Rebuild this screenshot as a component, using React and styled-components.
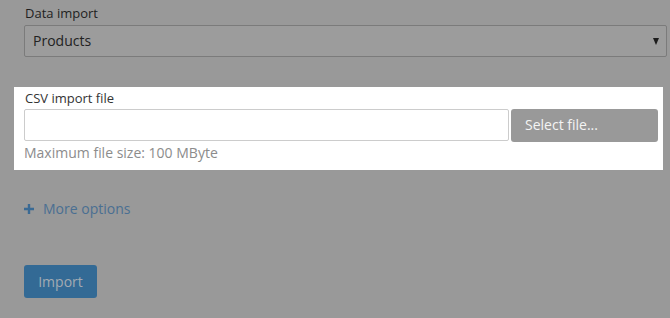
import React from "react";
import styled, { createGlobalStyle } from "styled-components";

const Global = createGlobalStyle`
  html, body { margin: 0; padding: 0; background: #999999; }
  body { font-family: "Open Sans", "Liberation Sans", sans-serif; }
  * { box-sizing: border-box; }
`;

const Page = styled.div`
  width: 670px;
  height: 318px;
  padding: 4px 3px 0 24px;
  display: flex;
  flex-direction: column;
`;

const Label = styled.label`
  display: block;
  font-size: 13px;
  line-height: 18px;
  color: ${(p) => (p.$lit ? "#333333" : "#1f1f1f")};
  padding-left: 1px;
  margin-bottom: ${(p) => (p.$lit ? "2px" : "3px")};
`;

const SelectBox = styled.div`
  height: 32px;
  border: 1px solid #7b7b7b;
  border-radius: 2px;
  background: #9c9c9c;
  display: flex;
  align-items: center;
  justify-content: space-between;
  padding: 0 7px 2px 8px;
  font-size: 14px;
  color: #222;
`;

const Arrow = styled.span`
  width: 0;
  height: 0;
  border-left: 3.5px solid transparent;
  border-right: 3.5px solid transparent;
  border-top: 7px solid #1c1c1c;
  margin-top: 2px;
`;

const Spotlight = styled.div`
  margin: 30px 0 0 -10px;
  width: 649px;
  height: 83px;
  background: #ffffff;
  padding: 2px 5px 0 10px;
`;

const FileRow = styled.div`
  display: flex;
  gap: 2px;
`;

const FileInput = styled.div`
  width: 485px;
  height: 32px;
  border: 1px solid #cccccc;
  border-radius: 2px;
  background: #fff;
`;

const GreyButton = styled.button`
  width: 147px;
  height: 33px;
  border: none;
  border-radius: 3px;
  background: #999999;
  color: #f4f4f4;
  font-family: inherit;
  font-size: 14px;
  text-align: left;
  padding: 0 14px 2px;
`;

const Help = styled.div`
  font-size: 14px;
  line-height: 20px;
  color: #8c8c8c;
  margin-top: 1px;
`;

const MoreLink = styled.div`
  margin-top: 29px;
  display: flex;
  align-items: center;
  gap: 9px;
  font-size: 14px;
  line-height: 20px;
  color: #4a6f92;
`;

const PrimaryButton = styled.button`
  margin-top: 46px;
  width: 73px;
  height: 33px;
  border: none;
  border-radius: 3px;
  background: #336a95;
  color: #a3aab2;
  font-family: inherit;
  font-size: 14px;
  padding: 0;
`;

const Plus = () => (
  <svg width="10" height="10" viewBox="0 0 10 10">
    <path d="M3.8 0h2.4v3.8H10v2.4H6.2V10H3.8V6.2H0V3.8h3.8z" fill="#3a6a94" />
  </svg>
);

export default function App() {
  return (
    <>
      <Global />
      <Page>
        <Label>Data import</Label>
        <SelectBox>
          <span>Products</span>
          <Arrow />
        </SelectBox>
        <Spotlight>
          <Label $lit>CSV import file</Label>
          <FileRow>
            <FileInput />
            <GreyButton>Select file...</GreyButton>
          </FileRow>
          <Help>Maximum file size: 100 MByte</Help>
        </Spotlight>
        <MoreLink>
          <Plus />
          <span>More options</span>
        </MoreLink>
        <PrimaryButton>Import</PrimaryButton>
      </Page>
    </>
  );
}
